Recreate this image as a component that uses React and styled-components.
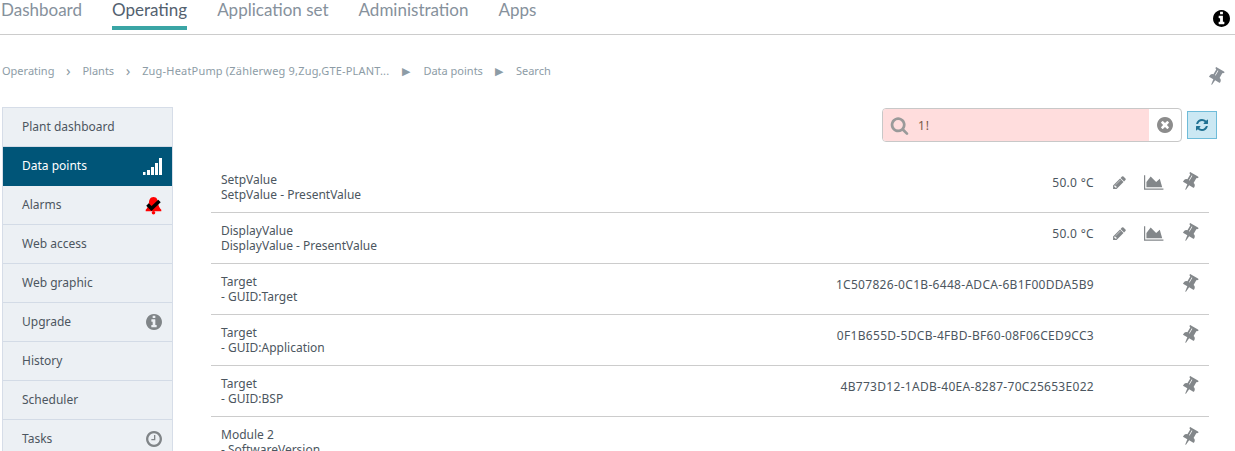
import React from "react";
import styled, { createGlobalStyle } from "styled-components";

const Global = createGlobalStyle`
  html, body { margin: 0; padding: 0; background: #fff; overflow: hidden; }
  body { font-family: "Noto Sans", sans-serif; color: #4a4f55; }
`;

const ICONS = {
  pin: ["0 0 1152 1792", "M480 672v-448q0-14-9-23t-23-9-23 9-9 23v448q0 14 9 23t23 9 23-9 9-23zm672 352q0 26-19 45t-45 19h-429l-51 483q-2 12-10.500 20.500t-20.500 8.500h-1q-27 0-32-27l-76-485h-404q-26 0-45-19t-19-45q0-123 78.500-221.500t177.500-98.500v-512q-52 0-90-38t-38-90 38-90 90-38h640q52 0 90 38t38 90-38 90-90 38v512q99 0 177.500 98.500t78.500 221.500z"],
  pencil: ["0 0 1792 1792", "M491 1536l91-91-235-235-91 91v107h128v128h107zm523-928q0-22-22-22-10 0-17 7l-542 542q-7 7-7 17 0 22 22 22 10 0 17-7l542-542q7-7 7-17zm-54-192l416 416-832 832h-416v-416zm683 96q0 53-37 90l-166 166-416-416 166-165q36-38 90-38 53 0 91 38l235 234q37 39 37 91z"],
  chart: ["0 0 2048 1792", "M2048 1536v128h-2048v-1536h128v1408h1920zm-384-1024l256 896h-1664v-576l448-576 576 576z"],
  search: ["0 0 1792 1792", "M1216 832q0-185-131.500-316.500t-316.500-131.500-316.500 131.500-131.500 316.500 131.500 316.500 316.500 131.500 316.500-131.500 131.500-316.500zm512 832q0 52-38 90t-90 38q-54 0-90-38l-343-342q-179 124-399 124-143 0-273.500-55.500t-225-150-150-225-55.500-273.500 55.500-273.500 150-225 225-150 273.500-55.500 273.500 55.500 225 150 150 225 55.500 273.500q0 220-124 399l343 343q37 37 37 90z"],
  refresh: ["0 0 1792 1792", "M1639 1056q0 5-1 7-64 268-268 434.500t-478 166.500q-146 0-282.500-55t-243.500-157l-129 129q-19 19-45 19t-45-19-19-45v-448q0-26 19-45t45-19h448q26 0 45 19t19 45-19 45l-137 137q71 66 161 102t187 36q134 0 250-65t186-179q11-17 53-117 8-23 30-23h192q13 0 22.500 9.500t9.500 22.500zm25-800v448q0 26-19 45t-45 19h-448q-26 0-45-19t-19-45 19-45l138-138q-148-137-349-137-134 0-250 65t-186 179q-11 17-53 117-8 23-30 23h-199q-13 0-22.500-9.500t-9.500-22.500v-7q65-268 270-434.500t480-166.500q146 0 284 55.500t245 156.500l130-129q19-19 45-19t45 19 19 45z"],
  info: ["128 128 1536 1536", "M1152 1376v-160q0-14-9-23t-23-9h-96v-512q0-14-9-23t-23-9h-320q-14 0-23 9t-9 23v160q0 14 9 23t23 9h96v320h-96q-14 0-23 9t-9 23v160q0 14 9 23t23 9h448q14 0 23-9t9-23zm-128-896v-160q0-14-9-23t-23-9h-192q-14 0-23 9t-9 23v160q0 14 9 23t23 9h192q14 0 23-9t9-23zm640 416q0 209-103 385.500t-279.500 279.500-385.500 103-385.500-103-279.500-279.500-103-385.500 103-385.500 279.500-279.500 385.500-103 385.500 103 279.500 279.500 103 385.500z"],
  clear: ["128 128 1536 1536", "M1277 1122q0-26-19-45l-181-181 181-181q19-19 19-45 0-27-19-46l-90-90q-19-19-46-19-26 0-45 19l-181 181-181-181q-19-19-45-19-27 0-46 19l-90 90q-19 19-19 46 0 26 19 45l181 181-181 181q-19 19-19 45 0 27 19 46l90 90q19 19 46 19 26 0 45-19l181-181 181 181q19 19 45 19 27 0 46-19l90-90q19-19 19-46zm387-226q0 209-103 385.500t-279.500 279.500-385.500 103-385.500-103-279.500-279.500-103-385.500 103-385.500 279.500-279.500 385.500-103 385.500 103 279.500 279.500 103 385.500z"],
  clock: ["128 128 1536 1536", "M1024 544v448q0 14-9 23t-23 9h-320q-14 0-23-9t-9-23v-64q0-14 9-23t23-9h224v-352q0-14 9-23t23-9h64q14 0 23 9t9 23zm416 352q0-148-73-273t-198-198-273-73-273 73-198 198-73 273 73 273 198 198 273 73 273-73 198-198 73-273zm224 0q0 209-103 385.500t-279.500 279.500-385.500 103-385.500-103-279.500-279.500-103-385.500 103-385.500 279.500-279.500 385.500-103 385.500 103 279.500 279.500 103 385.500z"],
};

const Svg = styled.svg`
  display: block; flex: none; fill: currentColor; height: ${p => p.$h}px;
  ${p => p.$tilt ? `transform: rotate(${p.$tilt}deg);` : ""}
`;
const Icon = ({ name, h, tilt }) => {
  const [vb, d] = ICONS[name];
  return <Svg viewBox={vb} $h={h} $tilt={tilt}><path d={d} /></Svg>;
};

const Page = styled.div`width: 1235px; height: 451px; overflow: hidden; display: flex; flex-direction: column;`;
const TopBar = styled.header`
  height: 35px; box-sizing: border-box; border-bottom: 1px solid #ccc; display: flex; justify-content: space-between; padding: 0 5px 0 1px; flex: none;
`;
const Tabs = styled.nav`display: flex; gap: 30px;`;
const Tab = styled.a`
  height: 30px; box-sizing: border-box; padding-top: 1px; line-height: 18px; font-family: "Lato", sans-serif; font-size: 17px;
  color: ${p => p.$active ? "#53616f" : "#86919c"};
  border-bottom: 4px solid ${p => p.$active ? "#3aa5a5" : "transparent"};
`;
const InfoBadge = styled.div`margin-top: 10px; color: #000;`;
const CrumbRow = styled.div`height: 72px; flex: none; display: flex; align-items: flex-start; justify-content: space-between; padding: 0 13px 0 2px; box-sizing: border-box;`;
const Crumbs = styled.div`display: flex; align-items: center; margin-top: 28px; font-size: 11px; color: #8d9ca6; height: 15px; white-space: nowrap;`;
const CrumbWide = styled.span`letter-spacing: .19px;`;
const Sep = styled.span`width: ${p => p.$w}px; text-align: center; font-size: ${p => p.$small ? 11 : 15}px; line-height: 15px; color: #8d9ca6;`;
const PagePin = styled.div`margin-top: 33px; color: #8a9097;`;
const Main = styled.div`display: flex; flex: 1; min-height: 0; padding-left: 2px;`;
const Side = styled.aside`width: 171px; flex: none; border: 1px solid #d6dde8; border-bottom: 0; background: #ecf0f4; box-sizing: border-box; align-self: flex-start;`;
const SideItem = styled.div`
  height: 39px; box-sizing: border-box; display: flex; align-items: center; justify-content: space-between;
  padding: 0 10px 2px 19px; font-size: 12px; border-bottom: 1px solid #d3dbe6;
  ${p => p.$active ? "background:#005578;color:#fff;border-bottom:0;" : "color:#4c5660;"}
`;
const Bars = styled.svg`width: 19px; height: 17px; margin-top: 2px;`;
const SideIcon = styled.span`color: #808588; display: flex; margin-top: 2px;`;
const AlarmIcon = styled.svg`width: 19px; height: 19px; margin: 2px -1px 0 0;`;
const Content = styled.section`flex: 1; padding-left: 38px; padding-right: 26px; min-width: 0;`;
const SearchRow = styled.div`display: flex; justify-content: flex-end; align-items: center; gap: 5px; height: 34px; margin: 1px -8px 0 0;`;
const SearchBox = styled.div`width: 300px; height: 34px; box-sizing: border-box; border: 1px solid #c8c8c8; border-radius: 4px; display: flex; overflow: hidden; background: #fff;`;
const SearchInput = styled.div`flex: 1; background: #fdd; display: flex; align-items: center; gap: 9px; padding-left: 7px; font-size: 12px; color: #7a5a48; letter-spacing: 1px;`;
const SearchIcon = styled.span`color: #9a9a9a; display: flex;`;
const Clear = styled.span`width: 32px; display: flex; align-items: center; justify-content: center; color: #8c8c8c;`;
const Refresh = styled.button`width: 30px; height: 28px; padding: 0; border: 1px solid #6fbcd9; background: #cbe8f3; color: #1f7192; display: flex; align-items: center; justify-content: center;`;
const Rows = styled.div`margin-top: 20px;`;
const Row = styled.div`height: 51px; box-sizing: border-box; border-bottom: 1px solid #ccc; display: flex; align-items: center; padding: 0 10px; font-size: 12px; color: #4c5660; line-height: 15px; &:last-child{border-bottom:0;}`;
const Labels = styled.div`flex: 1; white-space: nowrap; margin-bottom: 1px;`;
const Value = styled.div`white-space: nowrap; letter-spacing: .3px; margin-bottom: 10px;`;
const Actions = styled.div`width: 113px; flex: none; display: flex; align-items: center; justify-content: flex-end; color: #83878a; margin: 0 -8px 10px 0; height: 20px;`;
const Act = styled.span`width: ${p => p.$w}px; display: flex; justify-content: center;`;
const PinAct = styled(Act)`padding-top: 1px; padding-right: 2px; box-sizing: border-box;`;

const rows = [
  ["SetpValue", "SetpValue - PresentValue", "50.0 °C", true],
  ["DisplayValue", "DisplayValue - PresentValue", "50.0 °C", true],
  ["Target", "- GUID:Target", "1C507826-0C1B-6448-ADCA-6B1F00DDA5B9"],
  ["Target", "- GUID:Application", "0F1B655D-5DCB-4FBD-BF60-08F06CED9CC3"],
  ["Target", "- GUID:BSP", "4B773D12-1ADB-40EA-8287-70C25653E022"],
  ["Module 2", "- SoftwareVersion", ""],
];

const Bell = () => (
  <AlarmIcon viewBox="0 0 19 19">
    <path d="M9.500 1c3.400 0 4.400 3 4.600 6 .2 3 1.600 5 3.200 6.800v1.400H1.700v-1.400C3.300 12 4.700 10 4.900 7 5.100 4 6.100 1 9.500 1z" fill="#f00" />
    <circle cx="9.500" cy="16.800" r="1.800" fill="#f00" />
    <path d="M3.500 8.500l4 4L15.500 5" fill="none" stroke="#000" strokeWidth="3.600" />
  </AlarmIcon>
);

export default function App() {
  return (
    <Page>
      <Global />
      <TopBar>
        <Tabs>
          <Tab>Dashboard</Tab><Tab $active>Operating</Tab><Tab>Application set</Tab><Tab>Administration</Tab><Tab>Apps</Tab>
        </Tabs>
        <InfoBadge><Icon name="info" h={17} /></InfoBadge>
      </TopBar>
      <CrumbRow>
        <Crumbs>
          Operating<Sep $w={28}>›</Sep>Plants<Sep $w={28}>›</Sep><CrumbWide>Zug-HeatPump (Zählerweg 9,Zug,GTE-PLANT...</CrumbWide><Sep $w={34} $small>▶</Sep>Data points<Sep $w={33} $small>▶</Sep>Search
        </Crumbs>
        <PagePin><Icon name="pin" h={20} tilt={30} /></PagePin>
      </CrumbRow>
      <Main>
        <Side>
          <SideItem>Plant dashboard</SideItem>
          <SideItem $active>Data points
            <Bars viewBox="0 0 19 17"><g fill="#fff"><rect x="0" y="14" width="2.500" height="3"/><rect x="4" y="12" width="3" height="5"/><rect x="8" y="9" width="3" height="8"/><rect x="12" y="5" width="3" height="12"/><rect x="16" y="0" width="3" height="17"/></g></Bars>
          </SideItem>
          <SideItem>Alarms<Bell /></SideItem>
          <SideItem>Web access</SideItem>
          <SideItem>Web graphic</SideItem>
          <SideItem>Upgrade<SideIcon><Icon name="info" h={16} /></SideIcon></SideItem>
          <SideItem>History</SideItem>
          <SideItem>Scheduler</SideItem>
          <SideItem>Tasks<SideIcon><Icon name="clock" h={16} /></SideIcon></SideItem>
        </Side>
        <Content>
          <SearchRow>
            <SearchBox>
              <SearchInput><SearchIcon><Icon name="search" h={19} /></SearchIcon>1!</SearchInput>
              <Clear><Icon name="clear" h={16} /></Clear>
            </SearchBox>
            <Refresh><Icon name="refresh" h={14} /></Refresh>
          </SearchRow>
          <Rows>
            {rows.map((r, i) => (
              <Row key={i}>
                <Labels>{r[0]}<br />{r[1]}</Labels>
                <Value>{r[2]}</Value>
                <Actions>
                  {r[3] && <Act $w={32}><Icon name="pencil" h={15} /></Act>}
                  {r[3] && <Act $w={38}><Icon name="chart" h={17} /></Act>}
                  <PinAct $w={34}><Icon name="pin" h={20} tilt={30} /></PinAct>
                </Actions>
              </Row>
            ))}
          </Rows>
        </Content>
      </Main>
    </Page>
  );
}
